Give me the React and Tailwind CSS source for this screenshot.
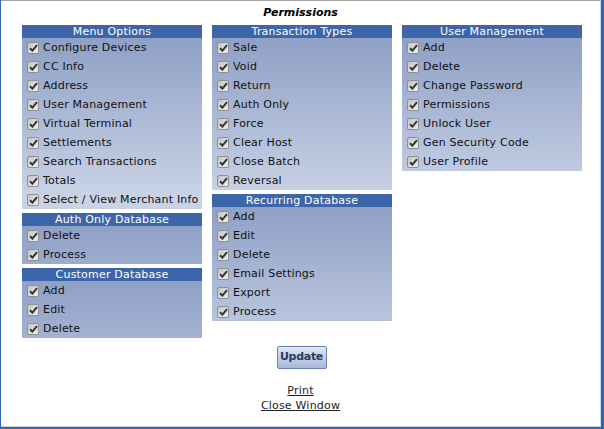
import React from 'react';

const menuOptions = ['Configure Devices', 'CC Info', 'Address', 'User Management', 'Virtual Terminal', 'Settlements', 'Search Transactions', 'Totals', 'Select / View Merchant Info'];
const authOnly = ['Delete', 'Process'];
const customerDb = ['Add', 'Edit', 'Delete'];
const transactionTypes = ['Sale', 'Void', 'Return', 'Auth Only', 'Force', 'Clear Host', 'Close Batch', 'Reversal'];
const recurringDb = ['Add', 'Edit', 'Delete', 'Email Settings', 'Export', 'Process'];
const userMgmt = ['Add', 'Delete', 'Change Password', 'Permissions', 'Unlock User', 'Gen Security Code', 'User Profile'];

function Check() {
  return (
    <span className="inline-flex items-center justify-center w-[12px] h-[12px] border border-[#8e8f8f] rounded-[2px] bg-[linear-gradient(135deg,#c4c4c4,#efefef)] shrink-0">
      <svg width="9" height="8" viewBox="0 0 9 8">
        <path d="M1 4.2 L3.4 6.6 L8 1.2" fill="none" stroke="#333" strokeWidth="2" />
      </svg>
    </span>
  );
}

function Panel({ title, items }) {
  return (
    <div className="w-[180px] bg-[#c9d3e6] bg-[linear-gradient(to_bottom,#8a9cc3,#c9d3e6_171px)]">
      <div className="h-[13px] bg-[#3d65aa] text-white text-center leading-[13px]">{title}</div>
      {items.map((it) => (
        <label key={it} className="flex items-center h-[19px] pl-[5px] gap-[4px] text-[#111] whitespace-nowrap">
          <Check />
          <span className="translate-y-[1px]">{it}</span>
        </label>
      ))}
    </div>
  );
}

export default function App() {
  return (
    <div className="w-[604px] h-[429px] bg-[#3164bd] pl-px pr-[3px] pb-[2px]" style={{ fontFamily: '"DejaVu Sans", Verdana, sans-serif' }}>
      <div className="h-full bg-white border-t border-t-[#a3a3a3] border-r border-b border-r-[#d8d8d8] border-b-[#cfcfcf] text-[11px] tracking-[0.2px]">
        <div className="h-[24px] flex items-center justify-center font-bold italic text-[11px] text-black tracking-normal">Permissions</div>
        <div className="flex gap-[10px] pl-[21px]">
          <div className="flex flex-col gap-[4px]">
            <Panel title="Menu Options" items={menuOptions} />
            <Panel title="Auth Only Database" items={authOnly} />
            <Panel title="Customer Database" items={customerDb} />
          </div>
          <div className="flex flex-col gap-[4px]">
            <Panel title="Transaction Types" items={transactionTypes} />
            <Panel title="Recurring Database" items={recurringDb} />
          </div>
          <div className="flex flex-col gap-[4px]">
            <Panel title="User Management" items={userMgmt} />
          </div>
        </div>
        <div className="flex flex-col items-center mt-[8px]">
          <button className="w-[50px] h-[23px] border border-[#6a82b6] rounded-[2px] bg-[linear-gradient(to_bottom,#dfe6f4,#a9b8da)] text-[#2d3a5e] font-bold text-[11px] tracking-[-0.3px] ml-[2px]">Update</button>
          <a href="#" className="mt-[14px] underline text-[#222] leading-[15px]">Print</a>
          <a href="#" className="underline text-[#222] leading-[15px]">Close Window</a>
        </div>
      </div>
    </div>
  );
}
